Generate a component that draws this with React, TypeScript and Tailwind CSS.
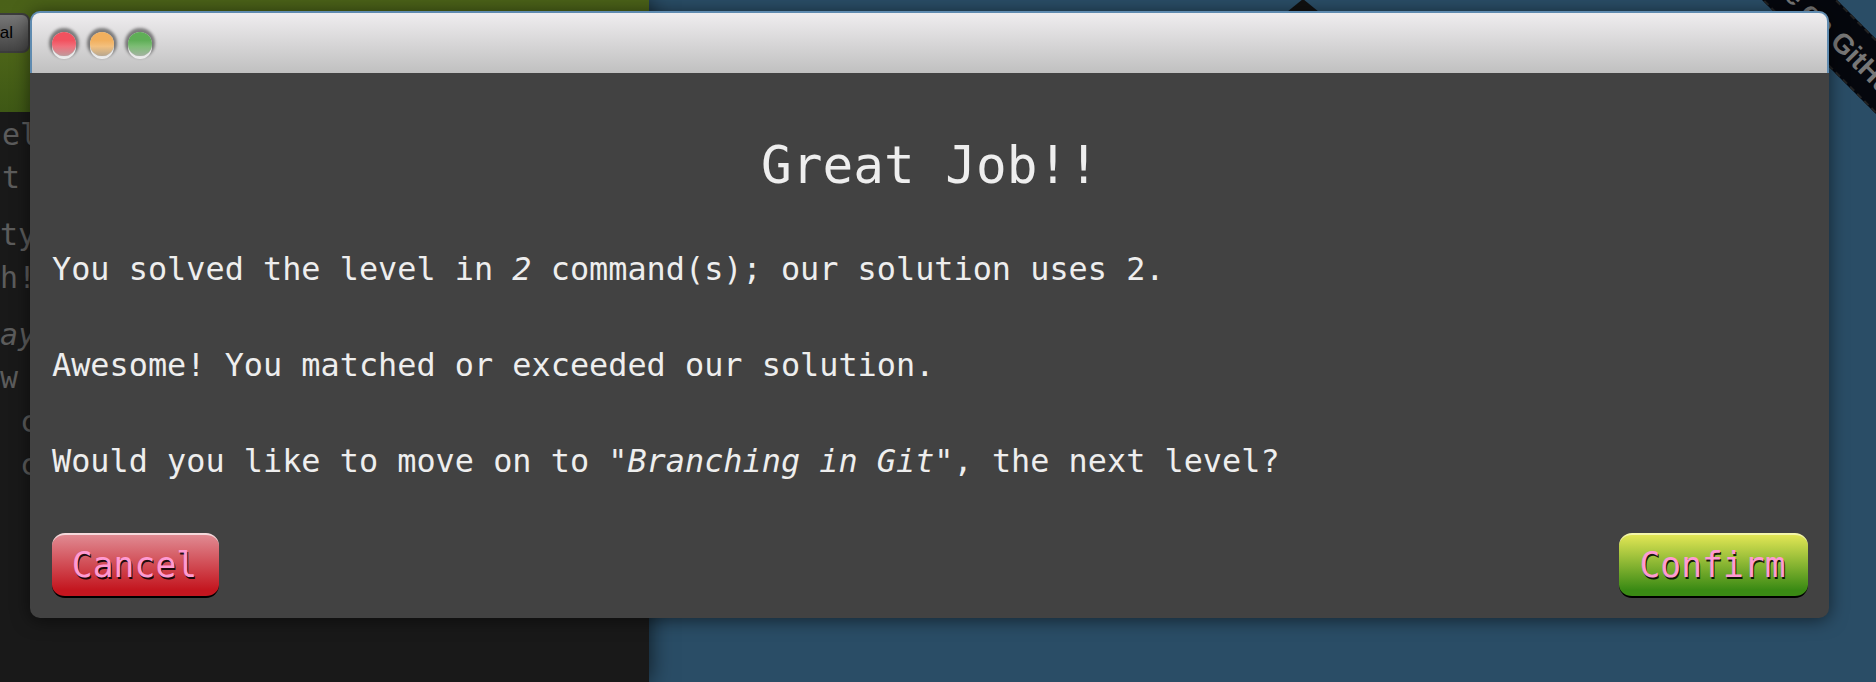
const mono = "font-['DejaVu_Sans_Mono','Liberation_Mono',monospace]";

function Light({ className }: { className: string }) {
  return (
    <span
      className={`mt-[2px] size-[24px] rounded-full shadow-[0_3px_0_rgba(255,255,255,0.8),0_-1px_3px_3px_rgba(0,0,0,0.45)] ${className}`}
    />
  );
}

function Btn({ label, className }: { label: string; className: string }) {
  return (
    <button
      className={`h-[65px] rounded-[13px] border-t-2 border-b-2 border-b-black pr-[2px] text-[34.7px] leading-none text-[#ff9ad2] [text-shadow:1px_2px_0_rgba(0,0,0,0.85)] ${mono} ${className}`}
    >
      {label}
    </button>
  );
}

function Sidebar() {
  return (
    <div className="z-10 flex w-[649px] shrink-0 flex-col overflow-hidden bg-[#191919] shadow-[0_0_22px_rgba(0,0,0,0.7)]">
      <div className="h-[112px] shrink-0 bg-[linear-gradient(#4a6118,#4b6318_50%,#3e5815)] pt-[13px]">
        <div className="flex h-[40px] w-[120px] -translate-x-[90px] items-center justify-end rounded-[8px] border-2 border-[#3c3c3c] bg-[linear-gradient(#777,#444)] pr-[15px] font-['Liberation_Sans',sans-serif] text-[17px] text-black">
          al
        </div>
      </div>
      <div className={`pl-[2px] pt-[1px] text-[30px] leading-[43px] text-[#5c5c5c] ${mono}`}>
        <p>el</p>
        <p className="mb-[14px]">t</p>
        <p className="-ml-[2px]">ty</p>
        <p className="mb-[14px] -ml-[2px]">h!</p>
        <p className="-ml-[2px] italic">ay</p>
        <p className="mb-[1px] -ml-[2px]">w</p>
        <p className="pl-[18px]">c</p>
        <p className="pl-[18px]">c</p>
      </div>
    </div>
  );
}

export default function App() {
  return (
    <div className="relative flex h-[682px] w-[1876px] overflow-hidden bg-[#2a4d66]">
      <Sidebar />
      <div className="flex-1" />

      {/* corner ribbon */}
      <div className="absolute left-[1638px] top-[12px] flex h-[53px] w-[400px] rotate-45 items-center justify-center border-y-2 border-dashed border-[#222] bg-[#05070d] pr-[72px] font-['Liberation_Sans',sans-serif] text-[28px] font-bold whitespace-nowrap text-[#777]">
        Fork me on GitHub
      </div>

      {/* something from the page peeking above the dialog */}
      <svg className="absolute left-[1286px] top-0" width="34" height="12" viewBox="0 0 34 12">
        <path d="M17 -1 L33 12 H1 Z" fill="#111" />
      </svg>

      <div className="absolute left-[30px] top-[11px] z-20 flex h-[607px] w-[1799px] flex-col rounded-[10px] bg-[#424242] shadow-[0_2px_18px_rgba(0,0,0,0.55)]">
        <div className="flex h-[62px] shrink-0 items-center gap-[14px] rounded-t-[10px] border-x-2 border-t-2 border-[#5f8bb0] bg-[linear-gradient(#efedef,#c0c0c0)] pl-[20px]">
          <Light className="bg-[linear-gradient(#f2525f_35%,#f0707c_60%,#c09a9c)]" />
          <Light className="bg-[linear-gradient(#f2b05e_35%,#f3c07e_60%,#b8a78f)]" />
          <Light className="bg-[linear-gradient(#5fae57_35%,#7dbd75_60%,#a3b3a0)]" />
        </div>

        <div className={`flex flex-1 flex-col pl-[22px] pr-[21px] text-[#eeeeee] ${mono}`}>
          <h2 className="mt-[63px] text-center text-[51px] leading-[60px]">Great Job!!</h2>
          <div className="mt-[49px] flex flex-col gap-[48px] text-[31.86px] leading-[48px]">
            <p>
              You solved the level in <em>2</em> command(s); our solution uses 2.
            </p>
            <p>Awesome! You matched or exceeded our solution.</p>
            <p>
              Would you like to move on to <em>"Branching in Git"</em>, the next level?
            </p>
          </div>
          <div className="mt-auto mb-[20px] flex justify-between">
            <Btn
              label="Cancel"
              className="w-[167px] border-t-[#f6d9dc] bg-[linear-gradient(#e08a92,#c4161f_90%)]"
            />
            <Btn
              label="Confirm"
              className="w-[189px] border-t-[#f4f7a8] bg-[linear-gradient(#e2e655,#3a8a14_90%)]"
            />
          </div>
        </div>
      </div>
    </div>
  );
}
